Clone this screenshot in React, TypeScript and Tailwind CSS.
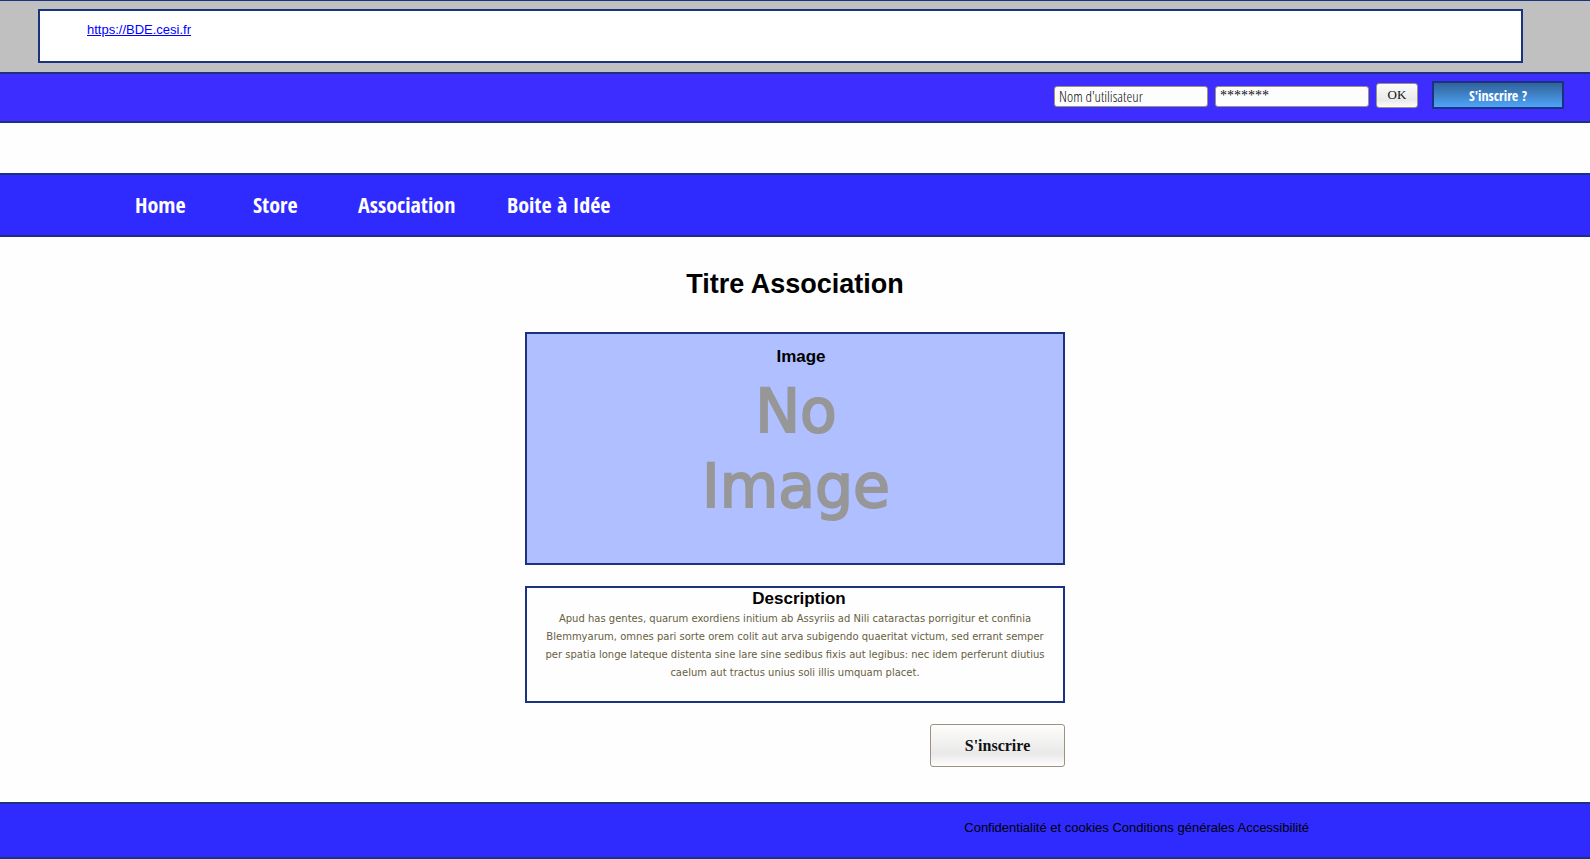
const navItems = ["Home", "Store", "Association", "Boite à Idée"];
const navWidths = ["w-[118px]", "w-[105px]", "w-[149px]", ""];

const condensed = "font-['Open_Sans_Condensed','Liberation_Sans_Narrow',sans-serif]";
const condensedLight = "font-['Open_Sans_Condensed_Light','Open_Sans_Condensed',sans-serif] font-light";
const field =
  "h-[21px] w-[154px] rounded-[3px] border border-[#9c9183] bg-[#fdfdfd] px-1 leading-none text-[#111111] outline-none";
const silver =
  "rounded-[3px] border border-[#9c9183] bg-linear-to-b from-[#fdfdfb] via-[#e9e9e9] via-70% to-[#fdfdfd] text-[#111111]";

function AddressBar() {
  return (
    <div className="border-t border-[#1b3281] bg-[#c0c0c0] pt-2 pr-[67px] pb-[9px] pl-[38px]">
      <div className="h-[54px] border-2 border-[#1b3281] bg-white pt-1.5 pl-[47px]">
        <a href="https://BDE.cesi.fr" className="text-[13px] leading-5 text-[#0000ff] underline">
          https://BDE.cesi.fr
        </a>
      </div>
    </div>
  );
}

function LoginBar() {
  return (
    <form
      onSubmit={(e) => e.preventDefault()}
      className="flex h-[51px] items-start justify-end border-y-2 border-[#1b3281] bg-[#3d2dff] pt-[7px] pr-[26px]"
    >
      <div className="flex items-center">
        <div className="mt-0.5 flex gap-[7px] pr-[7px]">
          <input
            type="text"
            aria-label="Nom d'utilisateur"
            defaultValue="Nom d'utilisateur"
            className={`${field} ${condensedLight} text-[15px]`}
          />
          <input
            type="text"
            aria-label="Mot de passe"
            defaultValue="*******"
            className={`${field} font-['Liberation_Serif',serif] text-[14px]`}
          />
        </div>
        <button
          type="submit"
          className={`${silver} mr-[14px] h-[25px] w-[42px] pb-0.5 font-['Liberation_Serif',serif] text-[13px] leading-none`}
        >
          OK
        </button>
        <button
          type="button"
          className={`${condensed} h-7 w-[132px] border-2 border-[#1b3281] bg-linear-to-b from-[#316398] to-[#4fa5fb] pt-0.5 text-[14px] leading-none font-bold text-white`}
        >
          S'inscrire ?
        </button>
      </div>
    </form>
  );
}

function MainNav() {
  return (
    <nav className="mt-[50px] flex h-16 items-center border-y-2 border-[#1b3281] bg-[#2f2bff] pl-[135px]">
      {navItems.map((item, i) => (
        <div key={item} className={navWidths[i]}>
          <a href="#" className={`${condensed} text-[22px] leading-7 font-bold whitespace-nowrap text-white`}>
            {item}
          </a>
        </div>
      ))}
    </nav>
  );
}

export default function App() {
  return (
    <div className="min-h-screen bg-[#fefefe] font-['Liberation_Sans',Arial,sans-serif] text-black">
      <header>
        <AddressBar />
        <LoginBar />
        <MainNav />
      </header>

      <main className="mx-auto max-w-[540px] pt-[31px] pb-[35px] text-center">
        <h1 className="text-[27px] leading-8 font-bold">Titre Association</h1>

        <section className="mt-8 h-[233px] border-2 border-[#1b3281] bg-[#afbfff] pt-[11px]">
          <h2 className="pl-3 text-[17px] leading-6 font-bold">Image</h2>
          <p className="mt-[5px] pl-0.5 font-['DejaVu_Sans',sans-serif] text-[60px] leading-[75px] text-[#979797] [-webkit-text-stroke:2px_#979797]">
            No
            <br />
            Image
          </p>
        </section>

        <section className="mt-[21px] h-[117px] border-2 border-[#1b3281] px-3">
          <h2 className="pl-2 text-[17px] leading-[22px] font-bold">Description</h2>
          <p className="font-['DejaVu_Sans',sans-serif] text-[10px] leading-[18px] text-[#67603f]">
            Apud has gentes, quarum exordiens initium ab Assyriis ad Nili cataractas porrigitur et confinia
            Blemmyarum, omnes pari sorte orem colit aut arva subigendo quaeritat victum, sed errant semper per
            spatia longe lateque distenta sine lare sine sedibus fixis aut legibus: nec idem perferunt diutius
            caelum aut tractus unius soli illis umquam placet.
          </p>
        </section>

        <div className="mt-[21px] flex justify-end">
          <button
            type="button"
            className={`${silver} h-[43px] w-[135px] font-['Liberation_Serif',serif] text-[16px] font-bold`}
          >
            S'inscrire
          </button>
        </div>
      </main>

      <footer className="h-[57px] border-y-2 border-[#1b3281] bg-[#2f2bff] pt-3.5 pr-[281px] text-right text-[13px] leading-5">
        <a href="#">Confidentialité et cookies</a> <a href="#">Conditions générales</a>{" "}
        <a href="#">Accessibilité</a>
      </footer>
    </div>
  );
}
